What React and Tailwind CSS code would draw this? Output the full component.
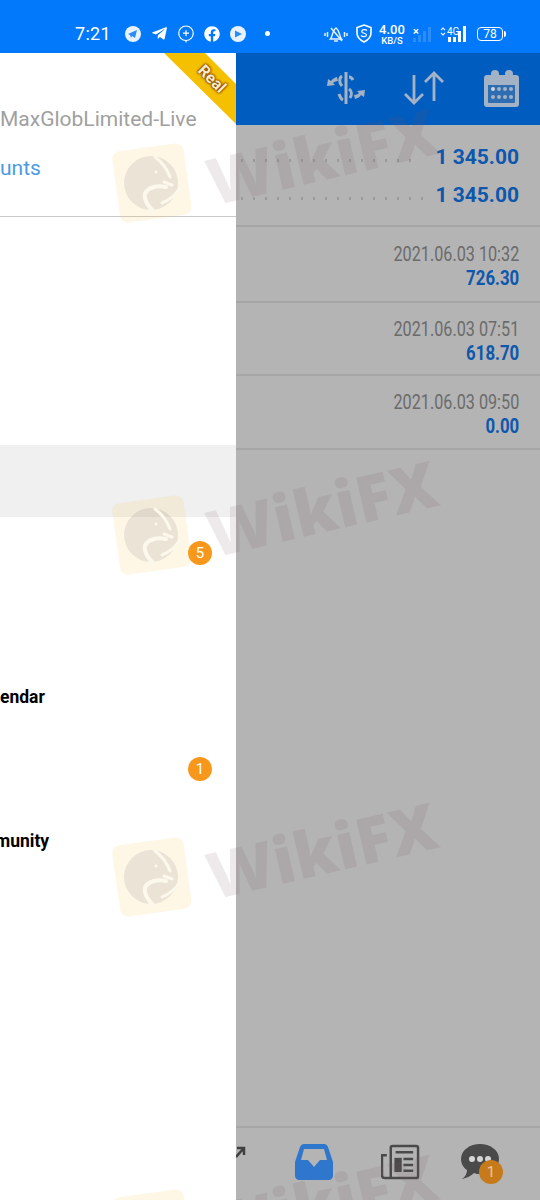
import React from "react";
import { FaTelegramPlane, FaFacebook } from "react-icons/fa";

const trades = [
  { date: "2021.06.03 10:32", value: "726.30", height: "h-[76px]" },
  { date: "2021.06.03 07:51", value: "618.70", height: "h-[73px]" },
  { date: "2021.06.03 09:50", value: "0.00", height: "h-[74px]" },
];

const Watermark = ({ className }) => (
  <div className={`absolute left-0 w-[540px] h-[140px] pointer-events-none ${className}`}>
    <svg className="absolute left-[108px] top-[26px]" width="88" height="88" viewBox="0 0 88 88">
      <rect x="8" y="7" width="72" height="72" rx="8" fill="#f9c53a" fillOpacity="0.13" transform="rotate(-8 44 44)" />
      <circle cx="43" cy="43" r="27" fill="#7d6f80" fillOpacity="0.15" />
      <g fill="none" stroke="#fdf8ec" strokeWidth="3" strokeLinecap="round">
        <path d="M47 17C54 22 59 29 62 37" />
        <path d="M56 42L64 45" />
        <path d="M58 47C46 44 35 50 37 58C38 63 41 67 45 71" strokeWidth="4" />
        <path d="M72 48C68 54 62 60 54 63" />
      </g>
      <circle cx="48" cy="32" r="1.500" fill="#fdf8ec" />
    </svg>
    <div className="absolute left-[205px] top-[2px] -rotate-[13deg] origin-center font-['Open_Sans',sans-serif] font-extrabold text-[64px] leading-[80px] tracking-[0.5px] text-[#78555a]/[0.13]">
      WikiFX
    </div>
  </div>
);

const Calendar = () => (
  <svg width="36" height="38" viewBox="0 0 36 38">
    <rect x="2" y="14" width="31" height="21" fill="#2f6db3" />
    <path d="M3 6h29a3 3 0 0 1 3 3v26a3 3 0 0 1-3 3H3a3 3 0 0 1-3-3V9a3 3 0 0 1 3-3Zm1 10v17a1 1 0 0 0 1 1h25a1 1 0 0 0 1-1V16Z" fill="#a3b2c4" fillRule="evenodd" />
    <circle cx="11" cy="5" r="4" fill="#a3b2c4" />
    <circle cx="25" cy="5" r="4" fill="#a3b2c4" />
    <g fill="#a3b2c4">
      <circle cx="9" cy="20" r="2" fill="#cfd6de" />
      <circle cx="15" cy="20" r="2" />
      <circle cx="21" cy="20" r="2" />
      <circle cx="27" cy="20" r="2" />
      <circle cx="9" cy="28" r="2" />
      <circle cx="15" cy="28" r="2" />
      <circle cx="21" cy="28" r="2" />
      <circle cx="27" cy="28" r="2" />
    </g>
  </svg>
);

const StatusBar = () => (
  <div className="h-[53px] shrink-0 bg-[#0279fa] relative flex items-center pt-[14px] pl-[75px] text-white font-['Roboto',sans-serif]">
    <span className="text-[18px] leading-none w-[50px] tracking-[0.3px]">7:21</span>
    <div className="flex items-center gap-[10px]">
      <svg width="16" height="16" viewBox="0 0 16 16">
        <circle cx="8" cy="8" r="8" fill="#e8f2fe" />
        <path d="M3 8l9-4-2 8-3-2-1 2-1-3Z" fill="#2c8cf7" />
      </svg>
      <FaTelegramPlane className="text-[17px]" />
      <svg width="16" height="20" viewBox="0 0 16 20" fill="none" stroke="#fff" strokeWidth="1.2">
        <path d="M8 16.5A7.2 7.2 0 1 1 8 2a7.2 7.2 0 0 1 0 14.5Zm0 0v2" />
        <path d="M5 9.2h6M8 6.2v6" />
      </svg>
      <FaFacebook className="text-[16px]" />
      <svg width="16" height="16" viewBox="0 0 16 16">
        <circle cx="8" cy="8" r="8" fill="#e8f2fe" />
        <path d="M5 4.500v7l7-3.500Z" fill="#2c8cf7" />
      </svg>
    </div>
    <span className="ml-[19px] w-[5px] h-[5px] rounded-full bg-white" />
    <div className="ml-[54px] flex items-center">
      <svg width="24" height="18" viewBox="0 0 24 18" fill="none" stroke="#e6f0fd" strokeWidth="1.5">
        <path d="M6.500 14c2-2 1.500-8 5.500-11 4 3 3.500 9 5.500 11Z" />
        <path d="M10 16h4" />
        <path d="M7 3l11 13" />
        <path d="M1 8v3M3.500 7v5M23 8v3M20.500 7v5" />
      </svg>
      <svg className="ml-[8px]" width="16" height="19" viewBox="0 0 16 19" fill="none" stroke="#fff" strokeWidth="1.6">
        <path d="M8 1l7 2.500V9c0 4-3 7-7 9-4-2-7-5-7-9V3.500Z" />
        <path d="M11 6.500C9.500 5 5.500 5.500 5.700 7.500 6 10 10.500 8.500 10.500 11 10.500 13 6.500 13 5 11.500" strokeWidth="1.2" />
      </svg>
      <div className="ml-[6px] w-[28px] flex flex-col items-center leading-none">
        <span className="text-[13px] leading-[13px] font-medium">4.00</span>
        <span className="text-[9.5px] leading-[9px] font-medium">KB/S</span>
      </div>
      <div className="ml-[7px] w-[19px] h-[16px] relative">
        <svg className="absolute left-0 top-0" width="19" height="16" viewBox="0 0 19 16" fill="#2b8cfa">
          <rect x="0" y="12" width="3" height="4" />
          <rect x="5" y="9" width="3" height="7" />
          <rect x="10" y="5" width="3" height="11" />
          <rect x="15" y="1" width="3" height="15" />
        </svg>
        <span className="absolute left-0 top-0 text-[11px] leading-none font-bold">×</span>
      </div>
      <div className="ml-[8px] w-[27px] h-[16px] relative">
        <svg className="absolute left-0 top-[1px]" width="6" height="9" viewBox="0 0 6 9" fill="none" stroke="#fff" strokeWidth="1.100">
          <path d="M1 3.200L3 1l2 2.200M1 5.800L3 8l2-2.200" />
        </svg>
        <span className="absolute left-[7px] top-0 text-[10px] leading-[11px]">4G</span>
        <svg className="absolute right-0 top-0" width="19" height="16" viewBox="0 0 19 16" fill="#fff">
          <rect x="0" y="11" width="3" height="5" />
          <rect x="5" y="11" width="3" height="5" />
          <rect x="10" y="5" width="3" height="11" />
          <rect x="15" y="0" width="3" height="16" />
        </svg>
      </div>
      <div className="ml-[10px] w-[26px] h-[14px] border border-white rounded-[4px] flex items-center justify-center text-[12px] leading-none">
        78
      </div>
      <span className="ml-[1px] w-[2px] h-[6px] rounded-r-sm bg-white" />
    </div>
  </div>
);

const Drawer = () => (
  <div className="w-[236px] shrink-0 bg-white relative overflow-hidden font-['Roboto',sans-serif]">
    <div className="h-[164px] border-b border-[#c9c9c9] overflow-hidden">
      <div className="pt-[53px] text-[21px] leading-[26px] text-[#a0a0a0] whitespace-nowrap">MaxGlobLimited-Live</div>
      <div className="pt-[23px] text-[21px] leading-[26px] text-[#4a9be2] whitespace-nowrap">unts</div>
    </div>
    <div className="pt-[12px]">
      <div className="h-[216px]" />
      <div className="h-[72px] bg-[#f0f0f0]" />
      <div className="h-[72px] flex items-center justify-end pr-6">
        <span className="w-6 h-6 rounded-full bg-[#f7981d] text-white text-[15px] flex items-center justify-center">5</span>
      </div>
      <div className="h-[72px]" />
      <div className="h-[72px] flex items-center pt-px text-[17.5px] font-bold text-black">endar</div>
      <div className="h-[72px] flex items-center justify-end pr-6">
        <span className="w-6 h-6 rounded-full bg-[#f7981d] text-white text-[15px] flex items-center justify-center">1</span>
      </div>
      <div className="h-[72px] flex items-center pt-px text-[17.5px] font-bold text-black overflow-hidden">
        <span className="-ml-[5px]">munity</span>
      </div>
    </div>
    <svg className="absolute top-0 right-0" width="72" height="72" viewBox="0 0 72 72">
      <polygon points="0,0 41,0 72,31 72,71" fill="#f5c000" />
    </svg>
    <span className="absolute right-[8px] top-[18px] rotate-45 text-[16px] font-bold leading-none text-[#fdeccc] [text-shadow:0_0_2px_#7a3b00,0_0_2px_#7a3b00,0_0_3px_#7a3b00]">
      Real
    </span>
  </div>
);

const Balance = ({ dotsWidth, className }) => (
  <div className={`flex items-center justify-end pr-[21px] ${className}`}>
    <div className={`h-[3px] mr-auto mt-[6px] bg-[radial-gradient(circle,#9a9a9a_1.5px,transparent_1.5px)] bg-[length:12px_3px] ${dotsWidth}`} />
    <span className="text-[21px] leading-none font-bold text-[#0d58ad]">1 345.00</span>
  </div>
);

const Main = () => (
  <div className="flex-1 min-w-0 flex flex-col bg-[#b4b4b4] font-['Roboto',sans-serif]">
    <div className="h-[72px] shrink-0 bg-[#005cbe] flex items-center pl-[90px] pb-[2px]">
      <svg width="40" height="38" viewBox="0 0 40 38">
        <g fill="#a3b2c4">
          <path d="M11 8C8 9 6 10 5 12L2 10L1 17L9 16L7 14C8 13 10 12 12 12Z" />
          <path d="M11 8C8 9 6 10 5 12L2 10L1 17L9 16L7 14C8 13 10 12 12 12Z" transform="rotate(180 20 19)" />
        </g>
        <g fill="none" stroke="#a3b2c4" strokeWidth="3">
          <path d="M20 3v32" />
          <path d="M16 7C13 9 13 14 16 17" />
          <path d="M23 8C25 8 26 9 27 11" />
          <path d="M23 20C26 22 26 26 24 29" />
          <path d="M13 25C14 28 15 30 17 31" />
        </g>
      </svg>
      <svg className="ml-[38px]" width="40" height="34" viewBox="0 0 40 34" fill="none" stroke="#a3b2c4" strokeWidth="2.800">
        <path d="M10 4v28M1 23l9 9 9-9" />
        <path d="M30 30V2M21 11l9-9 9 9" />
      </svg>
      <div className="ml-[40px]">
        <Calendar />
      </div>
    </div>
    <div className="h-[102px] shrink-0 border-b-2 border-[#a6a6a6] flex flex-col">
      <Balance dotsWidth="w-[179px]" className="h-[37px] mt-[14px]" />
      <Balance dotsWidth="w-[189px]" className="h-[38px]" />
    </div>
    {trades.map((trade) => (
      <div key={trade.date} className={`${trade.height} shrink-0 border-b-2 border-[#a6a6a6] flex flex-col items-end justify-center pt-[2px] pr-[21px]`}>
        <span className="text-[20px] leading-[26px] text-[#6b6b6b] scale-x-[0.81] origin-right">{trade.date}</span>
        <span className="text-[20px] leading-[22px] font-bold text-[#0d58ad] scale-x-[0.84] origin-right">{trade.value}</span>
      </div>
    ))}
    <div className="flex-1" />
    <div className="h-[74px] shrink-0 border-t-2 border-[#a6a6a6] relative flex items-start pt-[16px]">
      <svg className="absolute left-0 top-[18px]" width="10" height="12" viewBox="0 0 10 12" fill="none" stroke="#3f3f3f" strokeWidth="2.500">
        <path d="M0 11l8-9M1 2h7v7" />
      </svg>
      <svg className="ml-[59px]" width="38" height="36" viewBox="0 0 38 36">
        <path d="M9 0h20c2 0 3 1 4 3l5 15v14c0 2-2 4-4 4H4c-2 0-4-2-4-4V18L5 3C6 1 7 0 9 0Zm0 5L6 16h7l6 7 6-7h7L29 5Z" fill="#2f77cc" fillRule="evenodd" />
      </svg>
      <svg className="ml-[48px]" width="39" height="36" viewBox="0 0 40 36" fill="none" stroke="#4a4a4a" strokeWidth="2.500">
        <rect x="10" y="1.500" width="28" height="33" rx="2" />
        <path d="M10 34.500H4c-2 0-3-1-3-3V11h5" />
        <path d="M15 8h18M23 15h10M23 21h10M23 27h10" />
        <rect x="15" y="15" width="5" height="12" fill="#4a4a4a" />
      </svg>
      <div className="ml-[41px] relative">
        <svg width="38" height="36" viewBox="0 0 38 36">
          <path d="M19 0c10 0 19 6 19 15s-9 15-19 15c-2 0-4 0-6-1-3 3-7 5-12 6 3-2 5-5 5-9C3 24 0 20 0 15 0 6 9 0 19 0Z" fill="#4a4a4a" />
          <circle cx="11" cy="15" r="3" fill="#d6d6d6" />
          <circle cx="19" cy="15" r="3" fill="#d6d6d6" />
          <circle cx="27" cy="15" r="3" fill="#d6d6d6" />
        </svg>
        <span className="absolute left-[18px] top-[16px] w-6 h-6 rounded-full bg-[#c77a1a] text-[#e8c9a0] text-[15px] flex items-center justify-center">1</span>
      </div>
    </div>
  </div>
);

const App = () => {
  return (
    <div className="relative w-[540px] h-[1200px] overflow-hidden flex flex-col bg-white">
      <StatusBar />
      <div className="flex-1 flex min-h-0">
        <Drawer />
        <Main />
      </div>
      <Watermark className="top-[114px]" />
      <Watermark className="top-[466px]" />
      <Watermark className="top-[808px]" />
      <Watermark className="top-[1160px]" />
    </div>
  );
};

export default App;
